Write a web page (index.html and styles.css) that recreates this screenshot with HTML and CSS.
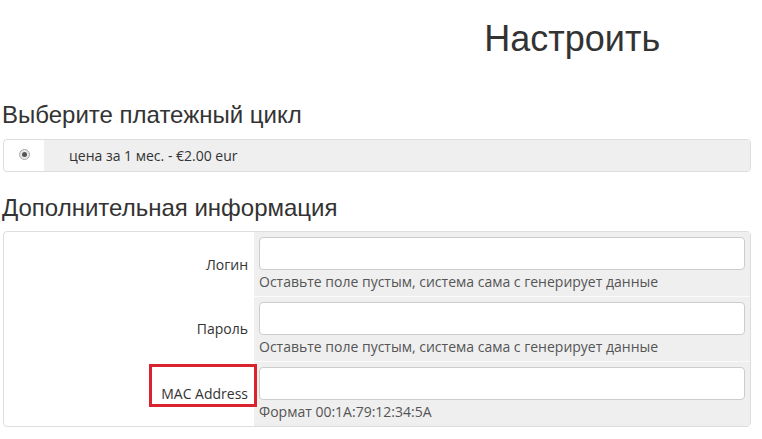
FILE: index.html
```html
<!DOCTYPE html>
<html lang="ru">
<head>
  <meta charset="UTF-8">
  <meta name="viewport" content="width=device-width, initial-scale=1.0">
  <title>Настроить</title>
  <link rel="stylesheet" href="styles.css">
</head>
<body>
  <div class="header">
    <div></div>
    <h1>Настроить</h1>
  </div>

  <h3 class="section-title first">Выберите платежный цикл</h3>
  <div class="cycle-box">
    <div class="cycle-radio"><span class="radio"></span></div>
    <div class="cycle-label">цена за 1 мес. - €2.00 eur</div>
  </div>

  <h3 class="section-title second">Дополнительная информация</h3>
  <div class="info-box">
    <div class="field-row">
      <div class="field-label">Логин</div>
      <div class="field-value">
        <input type="text" class="field-input">
        <div class="field-help">Оставьте поле пустым, система сама с генерирует данные</div>
      </div>
    </div>
    <div class="field-row">
      <div class="field-label">Пароль</div>
      <div class="field-value">
        <input type="text" class="field-input">
        <div class="field-help">Оставьте поле пустым, система сама с генерирует данные</div>
      </div>
    </div>
    <div class="field-row">
      <div class="field-label">
        MAC Address
        <span class="highlight"></span>
      </div>
      <div class="field-value">
        <input type="text" class="field-input">
        <div class="field-help">Формат 00:1A:79:12:34:5A</div>
      </div>
    </div>
  </div>
</body>
</html>
```

FILE: styles.css
```css
body {
  margin: 0;
  padding: 0 11px 0 3px;
  font-family: 'Open Sans', 'Liberation Sans', sans-serif;
  font-size: 14px;
  color: #333;
}
.header {
  display: grid;
  grid-template-columns: 1fr 1fr;
  margin-right: -11px;
  padding-top: 19px;
}
.header h1 {
  margin: 0;
  text-align: center;
  font-family: 'Liberation Sans', Arial, sans-serif;
  font-weight: normal;
  font-size: 36px;
  line-height: 40px;
  color: #333;
}
.section-title {
  margin: 0 0 0 -1px;
  font-family: 'Liberation Sans', Arial, sans-serif;
  font-weight: normal;
  font-size: 24px;
  line-height: 26px;
  color: #333;
}
.section-title.first {
  margin-top: 43px;
  margin-bottom: 11px;
}
.section-title.second {
  margin-top: 23px;
  margin-bottom: 10px;
}
.cycle-box {
  display: flex;
  border: 1px solid #ddd;
  border-radius: 4px;
  height: 31px;
  overflow: hidden;
}
.cycle-radio {
  width: 40px;
  display: flex;
  align-items: center;
  justify-content: center;
  padding-bottom: 2px;
  box-sizing: border-box;
}
.radio {
  width: 9px;
  height: 9px;
  border: 1px solid #aaa;
  border-radius: 50%;
  background: #e8e8e8;
  display: flex;
  align-items: center;
  justify-content: center;
}
.radio::after {
  content: '';
  width: 5px;
  height: 5px;
  border-radius: 50%;
  background: #555;
}
.cycle-label {
  flex: 1;
  background: #efefef;
  padding-left: 25px;
  display: flex;
  align-items: center;
}
.info-box {
  border: 1px solid #ddd;
  border-radius: 4px;
}
.field-row {
  display: grid;
  grid-template-columns: 250px 1fr;
}
.field-row + .field-row .field-value {
  border-top: 1px solid #fafafa;
}
.field-label {
  position: relative;
  display: flex;
  align-items: center;
  justify-content: flex-end;
  padding-right: 6px;
}
.field-value {
  background: #efefef;
  padding: 5px 5px 4px 5px;
}
.field-input {
  display: block;
  width: 100%;
  height: 33px;
  box-sizing: border-box;
  border: 1px solid #ccc;
  border-radius: 4px;
  background: #fff;
  font: inherit;
}
.field-help {
  margin-top: 2px;
  line-height: 20px;
  color: #555;
}
.highlight {
  position: absolute;
  left: 145px;
  top: 3px;
  width: 102px;
  height: 37px;
  border: 3px solid #d9232e;
  z-index: 1;
}
```
